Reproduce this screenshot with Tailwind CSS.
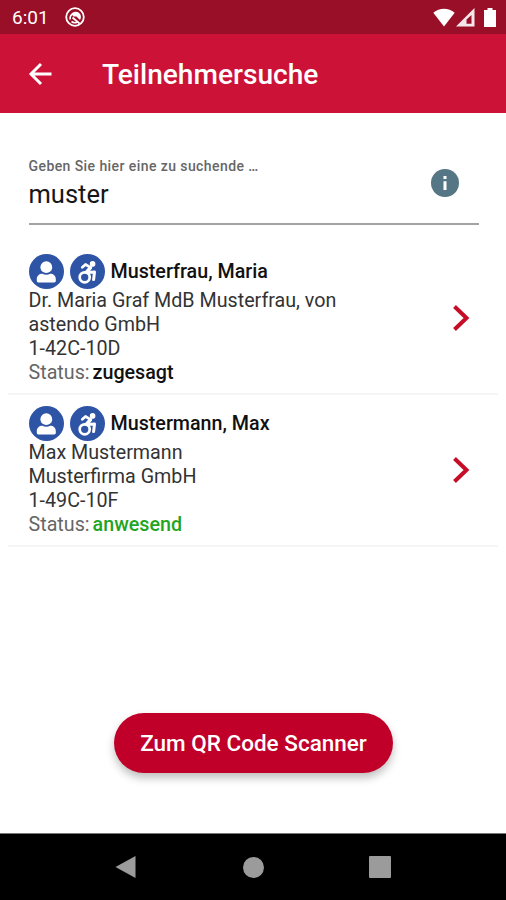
<!doctype html>
<html lang="de">

<head>
    <meta charset="UTF-8" />
    <meta name="viewport" content="width=device-width, initial-scale=1.0" />
    <title>Teilnehmersuche</title>
    <!-- tailwindcss -->
    <script src="https://cdn.jsdelivr.net/npm/@tailwindcss/browser@4"></script>
</head>

<body class="bg-white font-[Roboto,sans-serif]">
    <!-- shared icons -->
    <svg class="hidden">
        <symbol id="iconPerson" viewBox="0 0 35 35">
            <circle cx="17.5" cy="17.5" r="17.5" fill="#2e54a5" />
            <circle cx="17.3" cy="13.2" r="5.9" fill="#fff" />
            <path fill="#fff" d="M7.8 26.8v-1.8c0-3.2 2.5-5.2 5.5-5.2 1.4.6 2.7.9 4 .9s2.6-.3 4-.9c3 0 5.5 2 5.5 5.2v1.8c0 .9-.7 1.6-1.6 1.6H9.4c-.9 0-1.6-.7-1.6-1.6z" />
        </symbol>
        <symbol id="iconWheelchair" viewBox="0 0 35 35">
            <circle cx="17.5" cy="17.5" r="17.5" fill="#2e54a5" />
            <circle cx="22.6" cy="9.9" r="2.8" fill="#fff" />
            <g fill="none" stroke="#fff" stroke-linecap="round" stroke-linejoin="round">
                <path stroke-width="2.7" d="M12.3 13.3l3.2-2.8 5.3 3.1" />
                <path stroke-width="3.6" d="M20.3 13.8l-3.5 4.2" />
                <path stroke-width="3" d="M17 18.4l7.5-.3-.9 7.5" />
                <circle cx="14.7" cy="23.3" r="5" stroke-width="2.7" />
            </g>
        </symbol>
        <symbol id="iconChevron" viewBox="0 0 18 28">
            <path d="M2.5 2.5L14.5 14 2.5 25.5" fill="none" stroke="#c60c26" stroke-width="4" />
        </symbol>
    </svg>

    <div id="containerMain" class="flex flex-col h-[900px] w-[506px] overflow-hidden">

        <!-- Status bar -->
        <div id="statusBar" class="flex items-center h-[34px] pl-3 pr-2 bg-[#980f27] text-white shrink-0">
            <span class="text-[19px] w-[53px] pt-[3px]">6:01</span>
            <svg class="size-5" viewBox="0 0 20 20" fill="none" stroke="#fff">
                <circle cx="10" cy="10" r="8.8" stroke-width="1.8" />
                <path d="M5.2 12.5A5.5 5.5 0 0 1 14.8 8M6.5 14.5A5.5 5.5 0 0 0 12 15.2" stroke-width="1.6" />
                <path d="M6.5 7a5 5 0 0 1 8.5 6L11.5 9.5 8.5 9.5z" fill="#fff" stroke="none" />
                <path d="M7.5 10.5l7 6" stroke-width="1.8" />
            </svg>
            <svg class="ml-auto w-[22px] h-[19px]" viewBox="0 0 22 19">
                <path d="M11 18.5L.3 4.8C6.5-.6 15.5-.6 21.7 4.8z" fill="#fff" />
            </svg>
            <svg class="ml-px w-[19px] h-[19px]" viewBox="0 0 19 19">
                <path d="M0 18.5L18.5 0v18.500zM10.5 15.8h5V7l-5 4.5z" fill="#fff" fill-opacity=".9" fill-rule="evenodd" />
            </svg>
            <svg class="ml-[9px] mr-[2px] w-[12px] h-[19px]" viewBox="0 0 12 19">
                <path d="M3.5 0h5v2H12v17H0V2h3.5z" fill="#fff" />
            </svg>
        </div>

        <!-- Header -->
        <header class="flex items-center h-[79px] pl-7 bg-[#cc1236] text-white shrink-0">
            <svg class="w-6 h-6" viewBox="0 0 24 24" fill="none" stroke="#fff" stroke-width="3">
                <path d="M23.5 12H3M13 2L3 12l10 10" />
            </svg>
            <h1 class="ml-[50px] pt-[4px] text-[28.1px] font-medium">Teilnehmersuche</h1>
        </header>

        <!-- Search field -->
        <div id="searchField" class="flex justify-between h-[112px] ml-[28.5px] mr-[27px] pt-11 border-b-2 border-[#a3a3a3] shrink-0">
            <div>
                <label class="block text-[14px] leading-[18px] font-medium tracking-[0.42px] text-[#666]">Geben Sie hier eine zu suchende …</label>
                <p class="pt-px text-[25.5px] leading-[36px] text-[#161616]">muster</p>
            </div>
            <svg class="mt-3 mr-5 size-7" viewBox="0 0 28 28">
                <circle cx="14" cy="14" r="14" fill="#557684" />
                <path d="M12.5 7h3v3h-3zM12.5 12.2h3V21h-3z" fill="#fff" />
            </svg>
        </div>

        <!-- Results -->
        <ul id="results" class="mx-2 text-[19.7px] leading-6 text-[#333]">
            <li class="flex items-center justify-between h-[170px] pt-[29px] pb-[8px] pl-[20.5px] pr-7 border-b-2 border-[#f5f5f5]">
                <div>
                    <div class="flex items-center h-[35px]">
                        <svg class="size-[35px]"><use href="#iconPerson" /></svg>
                        <svg class="ml-[6px] size-[35px]"><use href="#iconWheelchair" /></svg>
                        <span class="ml-[6px] pt-px font-medium text-[#111]">Musterfrau, Maria</span>
                    </div>
                    <p>Dr. Maria Graf MdB Musterfrau, von</p>
                    <p>astendo GmbH</p>
                    <p>1-42C-10D</p>
                    <p class="text-[#666]">Status:<span class="ml-[3px] font-medium text-[#111]">zugesagt</span></p>
                </div>
                <svg class="w-[18px] h-7 mb-[4px]"><use href="#iconChevron" /></svg>
            </li>
            <li class="flex items-center justify-between h-[152px] pt-[11px] pb-[8px] pl-[20.5px] pr-7 border-b-2 border-[#f5f5f5]">
                <div>
                    <div class="flex items-center h-[35px]">
                        <svg class="size-[35px]"><use href="#iconPerson" /></svg>
                        <svg class="ml-[6px] size-[35px]"><use href="#iconWheelchair" /></svg>
                        <span class="ml-[6px] pt-px font-medium text-[#111]">Mustermann, Max</span>
                    </div>
                    <p>Max Mustermann</p>
                    <p>Musterfirma GmbH</p>
                    <p>1-49C-10F</p>
                    <p class="text-[#666]">Status:<span class="ml-[3px] font-medium text-[#1fa51f]">anwesend</span></p>
                </div>
                <svg class="w-[18px] h-7 mb-[4px]"><use href="#iconChevron" /></svg>
            </li>
        </ul>

        <!-- Scanner button -->
        <button id="scannerBtn" class="mt-auto mb-[60px] ml-[114px] w-[279px] h-[60px] pt-px shrink-0 rounded-full bg-[#c00029] text-white text-[22.5px] font-medium shadow-[0_5px_8px_rgba(0,0,0,0.25)]">
            Zum QR Code Scanner
        </button>

        <!-- Navigation bar -->
        <nav class="flex items-center h-[67px] pl-[115px] bg-black border-t border-[#777] shrink-0">
            <svg class="w-[21px] h-6" viewBox="0 0 21 24"><path d="M20.5 1v22L.5 12z" fill="#9b9b9b" /></svg>
            <div class="ml-[107px] size-[21px] rounded-full bg-[#9b9b9b]"></div>
            <div class="ml-[105px] size-[22px] rounded-[1px] bg-[#9b9b9b]"></div>
        </nav>
    </div>
</body>

</html>
